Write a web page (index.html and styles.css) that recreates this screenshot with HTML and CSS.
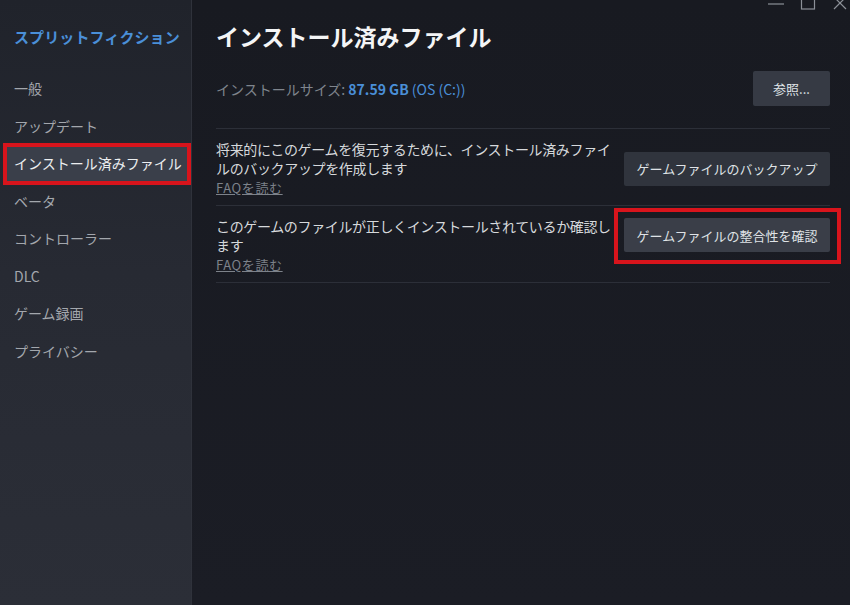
FILE: index.html
```html
<!DOCTYPE html>
<html lang="ja">
<head>
<meta charset="utf-8">
<title>インストール済みファイル</title>
<link rel="stylesheet" href="styles.css">
</head>
<body>
<div class="window">
  <aside class="sidebar">
    <div class="game-title">スプリットフィクション</div>
    <nav class="nav">
      <div class="nav-item">一般</div>
      <div class="nav-item">アップデート</div>
      <div class="nav-item nav-item--active">インストール済みファイル</div>
      <div class="nav-item">ベータ</div>
      <div class="nav-item">コントローラー</div>
      <div class="nav-item">DLC</div>
      <div class="nav-item">ゲーム録画</div>
      <div class="nav-item">プライバシー</div>
    </nav>
  </aside>
  <main class="main">
    <div class="win-controls">
      <svg class="wc wc-min" width="16" height="10" viewBox="0 0 16 10"><line x1="0" y1="4" x2="16" y2="4" stroke="#8c9098" stroke-width="1.2"/></svg>
      <svg class="wc wc-max" width="16" height="10" viewBox="0 0 16 10"><rect x="1.5" y="-3" width="13" height="12" fill="none" stroke="#8c9098" stroke-width="1.2"/></svg>
      <svg class="wc wc-close" width="16" height="10" viewBox="0 0 16 10"><path d="M2 -3 L14 9 M14 -3 L2 9" stroke="#8c9098" stroke-width="1.2"/></svg>
    </div>
    <h1 class="page-title">インストール済みファイル</h1>
    <div class="info-row">
      <div class="install-size">インストールサイズ: <span class="size-num">87.59 GB</span> <span class="size-drive">(OS (C:))</span></div>
      <button class="btn btn-browse">参照...</button>
    </div>
    <div class="row">
      <div class="row-text">
        <div class="desc">将来的にこのゲームを復元するために、インストール済みファイルのバックアップを作成します</div>
        <a class="faq">FAQを読む</a>
      </div>
      <button class="btn btn-action btn-backup">ゲームファイルのバックアップ</button>
    </div>
    <div class="row">
      <div class="row-text">
        <div class="desc">このゲームのファイルが正しくインストールされているか確認します</div>
        <a class="faq">FAQを読む</a>
      </div>
      <button class="btn btn-action btn-verify">ゲームファイルの整合性を確認</button>
    </div>
  </main>
</div>
</body>
</html>
```

FILE: styles.css
```css
* { box-sizing: border-box; }
html, body {
  margin: 0;
  padding: 0;
  width: 850px;
  height: 605px;
  overflow: hidden;
  background: #1a1c24;
  font-family: "Noto Sans CJK JP", "Noto Sans", sans-serif;
}
.window {
  display: flex;
  width: 850px;
  height: 605px;
}
.sidebar {
  width: 192px;
  flex: none;
  background: linear-gradient(180deg, #20232b 0%, #272a33 45%, #2b2e37 100%);
  border-right: 1px solid #2f323b;
}
.game-title {
  color: #4a8fd8;
  font-weight: 700;
  font-size: 15px;
  line-height: 20px;
  padding: 27px 0 0 14px;
  letter-spacing: 0.1px;
}
.nav {
  margin-top: 23px;
  display: flex;
  flex-direction: column;
}
.nav-item {
  height: 37.5px;
  line-height: 37.5px;
  padding-left: 14px;
  font-size: 14px;
  color: #a3a7ad;
  white-space: nowrap;
}
.nav-item--active {
  color: #eceef0;
  background: #3a3f4a;
  margin: 2px 4px 2px 7px;
  padding-left: 7px;
  height: 33.5px;
  line-height: 33.5px;
  outline: 4px solid #d8141c;
  outline-offset: 0;
}
.main {
  flex: 1;
  position: relative;
  padding: 0 20px 0 24px;
  background: linear-gradient(180deg, #181a21 0%, #1b1d25 100%);
}
.win-controls {
  position: absolute;
  top: 0;
  right: 2px;
  display: flex;
  gap: 16px;
}
.wc { display: block; }
.page-title {
  margin: 0;
  padding-top: 20px;
  font-size: 23px;
  line-height: 32px;
  font-weight: 700;
  color: #f4f5f6;
}
.info-row {
  display: flex;
  align-items: center;
  justify-content: space-between;
  margin-top: 19px;
  padding-bottom: 22px;
  border-bottom: 1px solid #2c2f38;
}
.install-size {
  font-size: 14px;
  color: #7f858d;
}
.size-num {
  color: #4a8fd8;
  font-weight: 700;
}
.size-drive { color: #4a8fd8; }
.btn {
  border: none;
  border-radius: 2px;
  font-family: inherit;
  font-size: 13px;
  color: #dfe2e6;
  padding: 0;
  cursor: pointer;
}
.btn-browse {
  width: 77px;
  height: 35px;
  background: #363a44;
}
.row {
  display: flex;
  align-items: flex-start;
  gap: 8px;
  padding: 11px 0 8px;
  border-bottom: 1px solid #2c2f38;
}
.row-text {
  flex: 1;
  color: #d6d9dc;
}
.desc {
  font-size: 14px;
  line-height: 18.5px;
  letter-spacing: -0.35px;
}
.faq {
  display: block;
  margin-top: 1px;
  font-size: 13px;
  line-height: 19px;
  letter-spacing: 0.6px;
  color: #7d828a;
  text-decoration: underline;
}
.btn-action {
  width: 206px;
  flex: none;
  height: 34px;
}
.btn-backup {
  background: #30343d;
  align-self: center;
}
.btn-verify {
  position: relative;
  margin-top: 1px;
  background: #3a3e48;
}
.btn-verify::after {
  content: "";
  position: absolute;
  inset: -10px -11px -12px -10px;
  border: 4px solid #d8141c;
}
```
